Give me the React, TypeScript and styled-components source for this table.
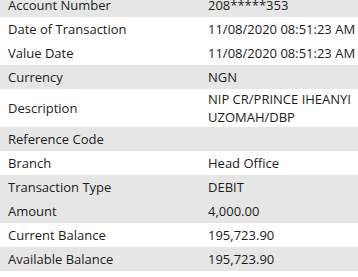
import React from "react";
import styled, { createGlobalStyle } from "styled-components";

const GlobalStyle = createGlobalStyle`
  html, body { margin: 0; padding: 0; background: #ffffff; }
  body { font-family: "Open Sans", "Liberation Sans", sans-serif; font-size: 13px; color: #1c1c1c; overflow: hidden; }
`;

const Sheet = styled.div`
  display: flex;
  flex-direction: column;
  margin-top: -7px;
  width: 358px;
`;

const Row = styled.div<{ $shaded: boolean }>`
  display: grid;
  grid-template-columns: 200px 1fr;
  align-items: center;
  min-height: 24px;
  box-sizing: border-box;
  padding: 1px 0;
  line-height: 18px;
  background: ${(p) => (p.$shaded ? "#e6e6e6" : "#ffffff")};
`;

const Label = styled.div`
  padding-left: 8px;
  white-space: nowrap;
`;

const Value = styled.div`
  padding-left: 8px;
  white-space: pre-line;
`;

const rows: { label: string; value: string; shaded: boolean }[] = [
  { label: "Account Number", value: "208*****353", shaded: true },
  { label: "Date of Transaction", value: "11/08/2020 08:51:23 AM", shaded: false },
  { label: "Value Date", value: "11/08/2020 08:51:23 AM", shaded: false },
  { label: "Currency", value: "NGN", shaded: true },
  { label: "Description", value: "NIP CR/PRINCE IHEANYI\nUZOMAH/DBP", shaded: false },
  { label: "Reference Code", value: "", shaded: true },
  { label: "Branch", value: "Head Office", shaded: false },
  { label: "Transaction Type", value: "DEBIT", shaded: true },
  { label: "Amount", value: "4,000.00", shaded: true },
  { label: "Current Balance", value: "195,723.90", shaded: false },
  { label: "Available Balance", value: "195,723.90", shaded: true },
];

export default function App() {
  return (
    <>
      <GlobalStyle />
      <Sheet>
        {rows.map((r) => (
          <Row key={r.label} $shaded={r.shaded}>
            <Label>{r.label}</Label>
            <Value>{r.value}</Value>
          </Row>
        ))}
      </Sheet>
    </>
  );
}
